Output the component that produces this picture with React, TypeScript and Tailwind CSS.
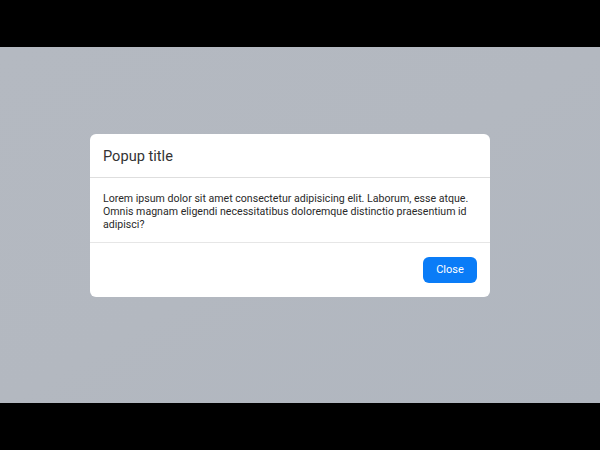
export default function App() {
  return (
    <div className="w-[600px] h-[450px] flex flex-col bg-black font-['Roboto',sans-serif]">
      <div className="h-[47px] shrink-0 bg-black" />
      <div className="h-[356px] shrink-0 bg-gradient-to-br from-[#b4b9c1] via-[#b3b8c0] to-[#b0b6bf] flex items-start justify-start pt-[87px] pl-[90px]">
        <div className="w-[400px] bg-white rounded-[6px] overflow-hidden">
          <div className="h-[44px] px-[13px] pt-[2px] flex items-center border-b border-[#dedede]">
            <h2 className="text-[14.6px] text-[#333] leading-none">Popup title</h2>
          </div>
          <div className="h-[65px] px-[13px] pt-[2px] flex items-center border-b border-[#e6e6e6]">
            <p className="text-[10.6px] leading-[13px] text-[#2a2a2a]">
              Lorem ipsum dolor sit amet consectetur adipisicing elit. Laborum, esse atque. Omnis magnam eligendi necessitatibus doloremque distinctio praesentium id adipisci?
            </p>
          </div>
          <div className="h-[54px] px-[13px] flex items-center justify-end">
            <button className="w-[54px] h-[26px] rounded-[6px] bg-[#0a7cf7] text-white text-[11px]">Close</button>
          </div>
        </div>
      </div>
      <div className="flex-1 bg-black" />
    </div>
  );
}
